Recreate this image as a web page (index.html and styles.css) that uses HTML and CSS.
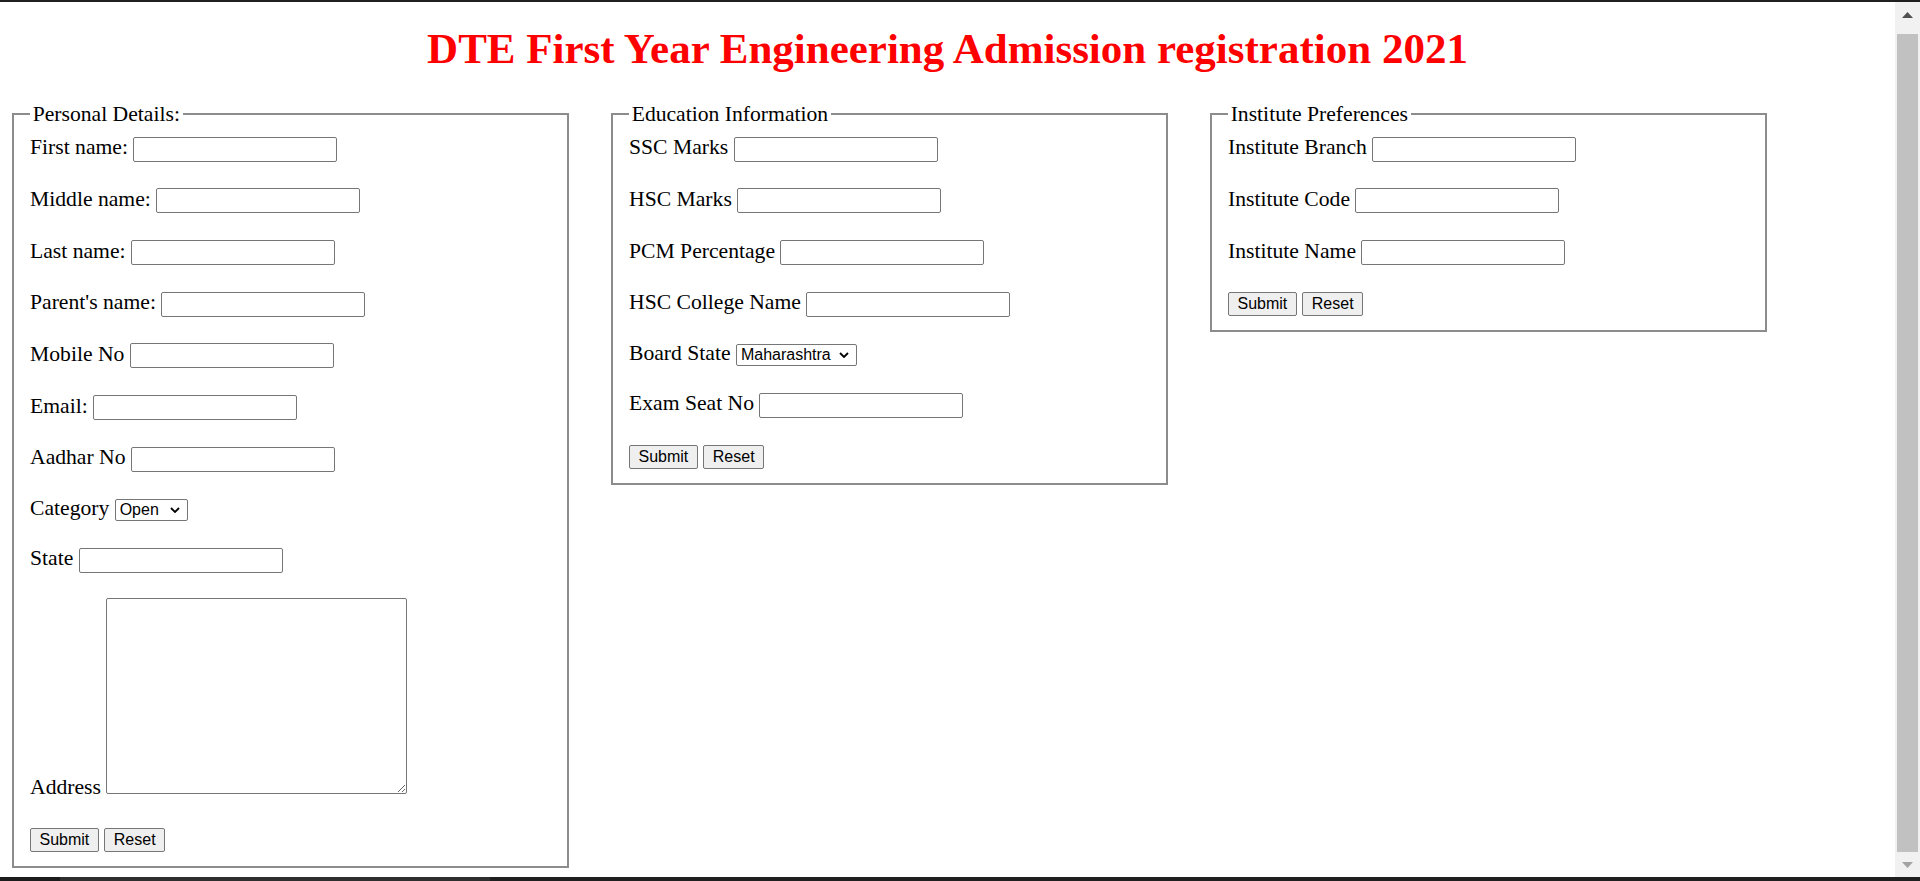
FILE: index.html
```html
<!DOCTYPE html>
<html lang="en">
<head>
<meta charset="utf-8">
<title>DTE First Year Engineering Admission registration 2021</title>
<link rel="stylesheet" href="styles.css">
</head>
<body>
<div class="screen">
  <div class="topbar"></div>
  <div class="middle">
    <main class="page">
      <h1 class="title">DTE First Year Engineering Admission registration 2021</h1>
      <div class="columns">
        <fieldset class="box">
          <legend class="box-legend">Personal Details:</legend>
          <div class="row"><label class="lbl">First name:</label><input class="field" type="text"></div>
          <div class="row"><label class="lbl">Middle name:</label><input class="field" type="text"></div>
          <div class="row"><label class="lbl">Last name:</label><input class="field" type="text"></div>
          <div class="row"><label class="lbl">Parent's name:</label><input class="field" type="text"></div>
          <div class="row"><label class="lbl">Mobile No</label><input class="field" type="text"></div>
          <div class="row"><label class="lbl">Email:</label><input class="field" type="text"></div>
          <div class="row"><label class="lbl">Aadhar No</label><input class="field" type="text"></div>
          <div class="row row-select"><label class="lbl">Category</label>
            <span class="select-wrap">
              <select class="choice choice-cat"><option>Open</option><option>OBC</option><option>SC</option><option>ST</option></select>
              <svg class="chev" width="10" height="6" viewBox="0 0 10 6"><path d="M1 1 L5 5 L9 1" fill="none" stroke="#000" stroke-width="1.8"/></svg>
            </span></div>
          <div class="row"><label class="lbl">State</label><input class="field" type="text"></div>
          <div class="row row-area"><label class="lbl lbl-area">Address</label><textarea class="area"></textarea></div>
          <div class="actions"><button class="btn" type="submit">Submit</button><button class="btn" type="reset">Reset</button></div>
        </fieldset>

        <fieldset class="box">
          <legend class="box-legend">Education Information</legend>
          <div class="row"><label class="lbl">SSC Marks</label><input class="field" type="text"></div>
          <div class="row"><label class="lbl">HSC Marks</label><input class="field" type="text"></div>
          <div class="row"><label class="lbl">PCM Percentage</label><input class="field" type="text"></div>
          <div class="row"><label class="lbl">HSC College Name</label><input class="field" type="text"></div>
          <div class="row row-select"><label class="lbl">Board State</label>
            <span class="select-wrap">
              <select class="choice choice-board"><option>Maharashtra</option><option>CBSE</option><option>ICSE</option></select>
              <svg class="chev" width="10" height="6" viewBox="0 0 10 6"><path d="M1 1 L5 5 L9 1" fill="none" stroke="#000" stroke-width="1.8"/></svg>
            </span></div>
          <div class="row row-last"><label class="lbl">Exam Seat No</label><input class="field" type="text"></div>
          <div class="actions"><button class="btn" type="submit">Submit</button><button class="btn" type="reset">Reset</button></div>
        </fieldset>

        <fieldset class="box">
          <legend class="box-legend">Institute Preferences</legend>
          <div class="row"><label class="lbl">Institute Branch</label><input class="field" type="text"></div>
          <div class="row"><label class="lbl">Institute Code</label><input class="field" type="text"></div>
          <div class="row row-last"><label class="lbl">Institute Name</label><input class="field" type="text"></div>
          <div class="actions"><button class="btn" type="submit">Submit</button><button class="btn" type="reset">Reset</button></div>
        </fieldset>
      </div>
    </main>
    <div class="scrollbar">
      <div class="sb-btn">
        <svg class="sb-arrow" width="11" height="6" viewBox="0 0 11 6"><path d="M0 6 L5.5 0 L11 6 Z" fill="#505050"/></svg>
      </div>
      <div class="sb-track"><div class="sb-thumb"></div></div>
      <div class="sb-btn">
        <svg class="sb-arrow" width="11" height="6" viewBox="0 0 11 6"><path d="M0 0 L11 0 L5.5 6 Z" fill="#a3a3a3"/></svg>
      </div>
    </div>
  </div>
  <div class="bottombar">
    <div class="bb-a"></div>
    <div class="bb-b"></div>
    <div class="bb-c"></div>
  </div>
</div>
</body>
</html>
```

FILE: styles.css
```css
html, body {
  margin: 0;
  padding: 0;
  height: 881px;
  overflow: hidden;
  background: #ffffff;
}

.screen {
  display: flex;
  flex-direction: column;
  height: 881px;
  width: 1920px;
}

.topbar {
  height: 2px;
  background: #202020;
  flex: none;
}

.middle {
  flex: 1;
  display: flex;
  min-height: 0;
}

.page {
  flex: 1;
  min-width: 0;
  overflow: hidden;
  background: #ffffff;
  font-family: "Liberation Serif", "Times New Roman", serif;
  font-size: 21.65px;
  color: #000000;
}

.title {
  margin: 22.2px 0 28.6px;
  text-align: center;
  color: #ff0000;
  font-family: "Liberation Serif", "Times New Roman", serif;
  font-weight: bold;
  font-size: 43px;
  line-height: 49px;
}

.columns {
  display: flex;
  align-items: flex-start;
  gap: 42px;
  padding-left: 12px;
}

.box {
  box-sizing: border-box;
  width: 557px;
  margin: 0;
  min-width: 0;
  padding: 10.5px 16px 14px;
  border: 2px solid #8c8c8c;
}

.box-legend {
  padding: 0 2.67px;
  font-size: 21.65px;
  line-height: 24.5px;
}

.row {
  display: flex;
  align-items: baseline;
  column-gap: 5.33px;
  height: 25px;
  margin-bottom: 26.67px;
}

.row-select {
  height: 22px;
  margin-bottom: 27.33px;
}

.row-last {
  margin-bottom: 27px;
}

.row-area {
  align-items: flex-end;
  height: 196px;
  margin-top: -1.67px;
  margin-bottom: 34px;
}

.lbl {
  line-height: 1;
  white-space: nowrap;
}

.lbl-area {
  margin-bottom: -4.5px;
}

.field {
  box-sizing: border-box;
  width: 204px;
  height: 25px;
  margin: 0;
  padding: 1px 3px;
  border: 1px solid #767676;
  border-radius: 2px;
  background: #ffffff;
  font-family: "Liberation Sans", Arial, sans-serif;
  font-size: 16px;
}

.select-wrap {
  position: relative;
  display: inline-flex;
}

.choice {
  -webkit-appearance: none;
  appearance: none;
  box-sizing: border-box;
  height: 22px;
  margin: 0;
  padding: 0 0 0 4px;
  border: 1px solid #767676;
  border-radius: 2px;
  background: #ffffff;
  color: #000000;
  font-family: "Liberation Sans", Arial, sans-serif;
  font-size: 16px;
}

.choice-cat {
  width: 73px;
}

.choice-board {
  width: 121px;
}

.chev {
  position: absolute;
  right: 8px;
  top: 8px;
  pointer-events: none;
}

.area {
  box-sizing: border-box;
  width: 301px;
  height: 196px;
  margin: 0;
  padding: 2px;
  border: 1px solid #767676;
  border-radius: 2px;
  background: #ffffff;
  font-family: "Liberation Mono", monospace;
  font-size: 16px;
}

.actions {
  display: flex;
  column-gap: 5.5px;
  height: 24px;
}

.btn {
  box-sizing: border-box;
  height: 24px;
  margin: 0;
  padding: 0 8.5px;
  border: 1px solid #767676;
  border-radius: 2px;
  background: #efefef;
  color: #000000;
  font-family: "Liberation Sans", Arial, sans-serif;
  font-size: 16px;
  line-height: 1;
}

.scrollbar {
  flex: none;
  width: 25px;
  background: #f1f1f1;
  display: flex;
  flex-direction: column;
}

.sb-btn {
  height: 25px;
  flex: none;
  display: flex;
  align-items: center;
  justify-content: center;
}

.sb-arrow {
  display: block;
}

.sb-track {
  flex: 1;
  padding: 7px 2px 0;
  display: flex;
}

.sb-thumb {
  flex: 1;
  background: #c1c1c1;
}

.bottombar {
  flex: none;
  height: 4px;
  display: flex;
  background: #1f1f1f;
}

.bb-a {
  width: 60px;
  background: #1c1c1c;
}

.bb-b {
  width: 430px;
  background: #2e2e2e;
}

.bb-c {
  flex: 1;
  background: #1f1f1f;
}
```
